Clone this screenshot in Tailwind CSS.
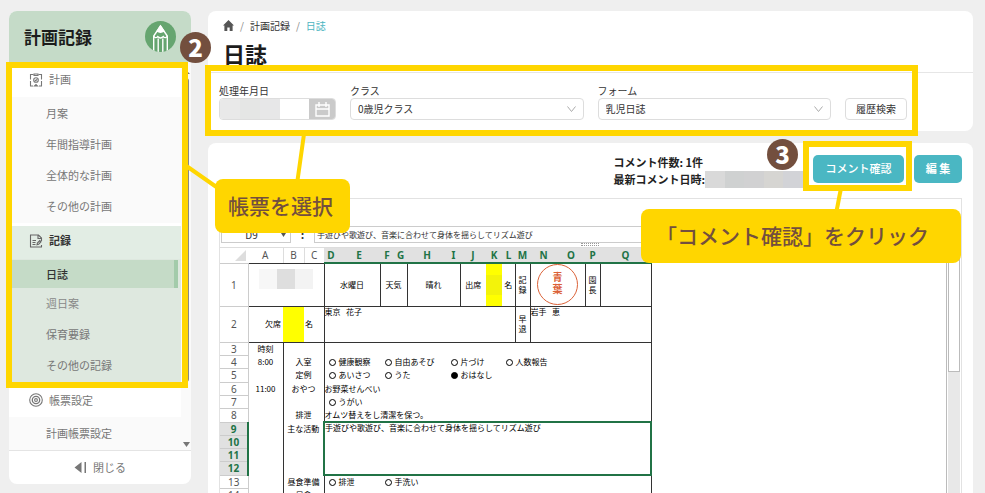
<!DOCTYPE html>
<html lang="ja">
<head>
    <meta charset="UTF-8">
    <meta name="viewport" content="width=device-width, initial-scale=1.0">
    <title>日誌 - 計画記録</title>
    <script src="https://cdn.jsdelivr.net/npm/@tailwindcss/browser@4"></script>
</head>
<body class="relative flex h-screen gap-[17px] overflow-hidden bg-[#efefef] pt-[11px] pr-3 pl-[9px] font-['Noto_Sans_CJK_JP',sans-serif] text-[#333]">

    <!-- Sidebar -->
    <aside class="mb-[9px] flex w-[182px] shrink-0 flex-col overflow-hidden rounded-lg bg-white text-[11px] text-[#777]">
        <div class="flex h-[51px] shrink-0 items-center justify-between bg-[#c5dbc8] pr-[15px] pl-[15px]">
            <h2 class="text-[17px] font-bold text-[#1c1c1c]">計画記録</h2>
            <svg class="size-[31px]" viewBox="0 0 31 31" fill="none" stroke="#fff">
                <defs><clipPath id="disc"><circle cx="15.5" cy="15.5" r="15.5"/></clipPath></defs>
                <circle cx="15.5" cy="15.5" r="15.5" fill="#66a570" stroke="none"/>
                <g clip-path="url(#disc)" stroke-width="1.4">
                    <path d="M8.7 31V15L15.5 5l6.8 10v16"/>
                    <path d="M15.5 5l-3.4 5.2q3.4 2 6.8 0z" fill="#fff"/>
                    <path d="M8.7 15q1.7 3 3.9.6 2.9 2.8 5.8 0 2.2 2.4 3.9-.6"/>
                    <path d="M13.2 17.5V31M17.8 17.5V31"/>
                </g>
            </svg>
        </div>
        <div class="flex min-h-0 flex-1">
            <nav class="flex-1 overflow-hidden">
                <a href="#" class="flex h-[35px] items-center gap-1.5 pl-5">
                    <svg class="size-[14px]" viewBox="0 0 14 14" fill="none" stroke="#777" stroke-width="1.1">
                        <path d="M4.5 1.500H1.500v5M1.500 8v5H4M9.500 1.500h3v5M12.500 8v5H10"/>
                        <path d="M5 2.500V1h4v1.500z"/>
                        <circle cx="7" cy="7" r="2.300"/>
                        <path d="M6 7l.8.8L8.200 6.200M5.500 13l1.500-1.500L8.500 13z"/>
                    </svg>
                    計画
                </a>
                <div class="flex flex-col bg-[#fafafa] py-px">
                    <a href="#" class="flex h-[31px] items-center pl-[37px]">月案</a>
                    <a href="#" class="flex h-[31px] items-center pl-[37px]">年間指導計画</a>
                    <a href="#" class="flex h-[31px] items-center pl-[37px]">全体的な計画</a>
                    <a href="#" class="flex h-[31px] items-center pl-[37px]">その他の計画</a>
                </div>
                <a href="#" class="mt-[3px] flex h-[33px] items-center gap-1.5 bg-[#e2ede4] pb-1 pl-5 font-bold text-[#333]">
                    <svg class="size-[14px]" viewBox="0 0 14 14" fill="none" stroke="#666" stroke-width="1.1">
                        <path d="M12.500 7V4L9.500 1H1.500v12h11v-2M9 1v3.500h3.500"/>
                        <path d="M3.500 6.500h3.500M3.500 8.500h3M3.500 10.500h3M8 10.800l.4-1.800L10.800 6.500l1.200 1.200-2.400 2.600z"/>
                    </svg>
                    記録
                </a>
                <div class="flex flex-col bg-[#dee8df] pt-px pb-1">
                    <a href="#" class="mr-[3px] flex h-7 items-center border-r-4 border-[#a3cbaa] bg-[#c5dbc7] pl-[37px] font-medium text-[#333]">日誌</a>
                    <a href="#" class="flex h-[31px] items-center pl-[37px] text-[#888]">週日案</a>
                    <a href="#" class="flex h-[31px] items-center pl-[37px]">保育要録</a>
                    <a href="#" class="flex h-[31px] items-center pl-[37px]">その他の記録</a>
                </div>
                <a href="#" class="flex h-[32px] items-center gap-1.5 pb-0.5 pl-5">
                    <svg class="size-[14px]" viewBox="0 0 14 14" fill="none" stroke="#777" stroke-width="1.1">
                        <circle cx="7" cy="7" r="6.3"/>
                        <circle cx="7" cy="7" r="3.7" stroke-width="1.3"/>
                        <circle cx="7" cy="7" r="1.4"/>
                    </svg>
                    帳票設定
                </a>
                <div class="bg-[#fafafa]">
                    <a href="#" class="flex h-[34px] items-center pb-0.5 pl-[37px]">計画帳票設定</a>
                </div>
            </nav>
            <div class="flex w-[10px] flex-col items-center justify-between bg-[#fafafa] pt-2 pb-[3px]">
                <svg class="h-1 w-2" viewBox="0 0 8 4" fill="#777"><path d="M0 4l4-4 4 4z"/></svg>
                <div class="my-1 mb-[60px] w-1.5 flex-1 rounded-full bg-[#888]"></div>
                <svg class="h-[5px] w-[7px] shrink-0" viewBox="0 0 7 5" fill="#777"><path d="M0 0h7L3.500 5z"/></svg>
            </div>
        </div>
        <button class="flex h-[34px] shrink-0 items-center justify-center gap-1.5 border-t border-[#e4e4e4]">
            <svg class="h-[11px] w-[13px]" viewBox="0 0 13 11" fill="#777"><path d="M7.500 0v11L.5 5.500zM10.500 0H12v11h-1.500z"/></svg>
            閉じる
        </button>
    </aside>

    <main class="flex min-w-0 flex-1 flex-col gap-3">
        <!-- Title and search form -->
        <section class="h-[120px] shrink-0 rounded-lg bg-white">
            <div class="h-[62px] border-b border-[#e6e6e6] px-[15px] pt-[7px]">
                <div class="flex items-center gap-1.5 text-[10px] leading-[15px]">
                    <svg class="h-[11px] w-[11px]" viewBox="0 0 11 11" fill="#555"><path d="M5.500 0L11 5.600H9.600V11H6.700V7.500H4.300V11H1.400V5.600H0z"/></svg>
                    <span class="text-[#888]">/</span>
                    <a href="#">計画記録</a>
                    <span class="text-[#888]">/</span>
                    <a href="#" class="text-[#4bb5c1]">日誌</a>
                </div>
                <h1 class="mt-1.5 text-[22px] leading-[28px] font-bold text-[#1c1c1c]">日誌</h1>
            </div>
            <form class="flex items-end gap-[14px] pt-[10px] pr-[66px] pl-[11px] text-[10px]">
                <div class="w-[117px]">
                    <label for="date" class="block leading-[15px]">処理年月日</label>
                    <div class="flex h-[22px] overflow-hidden rounded border border-[#ddd]">
                        <div class="relative flex-1">
                            <input id="date" type="text" class="size-full">
                            <div class="absolute inset-y-0 left-0 flex w-[60px]">
                                <span class="flex-1 bg-[#e9e9e9]"></span>
                                <span class="flex-1 bg-[#e5e6e5]"></span>
                                <span class="flex-1 bg-[#e7e7e8]"></span>
                            </div>
                        </div>
                        <button type="button" aria-label="カレンダー" class="flex w-[26px] items-center justify-center bg-[#cacaca]">
                            <svg class="size-[15px]" viewBox="0 0 15 15" fill="none" stroke="#fff" stroke-width="1.4"><path d="M1 3h13v11H1zM1 7h13M4 0v5M11 0v5"/></svg>
                        </button>
                    </div>
                </div>
                <div class="flex-1">
                    <label for="class" class="block leading-[15px]">クラス</label>
                    <div class="relative">
                        <select id="class" class="block h-[22px] w-full appearance-none rounded border border-[#ddd] bg-white px-[7px] pb-0.5">
                            <option>0歳児クラス</option>
                        </select>
                        <svg class="pointer-events-none absolute top-2 right-2 h-1.5 w-[9px]" viewBox="0 0 9 6" fill="none" stroke="#aaa"><path d="M.5.5l4 5 4-5"/></svg>
                    </div>
                </div>
                <div class="flex-1">
                    <label for="form" class="block leading-[15px]">フォーム</label>
                    <div class="relative">
                        <select id="form" class="block h-[22px] w-full appearance-none rounded border border-[#ddd] bg-white px-[7px] pb-0.5">
                            <option>乳児日誌</option>
                        </select>
                        <svg class="pointer-events-none absolute top-2 right-2 h-1.5 w-[9px]" viewBox="0 0 9 6" fill="none" stroke="#aaa"><path d="M.5.5l4 5 4-5"/></svg>
                    </div>
                </div>
                <button type="button" class="h-[22px] w-[62px] rounded border border-[#ddd] pb-0.5">履歴検索</button>
            </form>
        </section>

        <!-- Sheet -->
        <section class="flex min-h-0 flex-1 flex-col rounded-t-lg bg-white px-[11px]">
            <div class="flex h-[55px] shrink-0 items-center justify-end gap-[10px] pb-1 text-[11px]">
                <div class="pt-1 font-bold text-[#222]">
                    <p class="leading-[17px]">コメント件数: 1件</p>
                    <div class="flex items-center leading-[17px]">最新コメント日時:
                        <div class="flex h-[17px] w-[98px]">
                            <span class="flex-1 bg-[#d9d9d9]"></span>
                            <span class="flex-1 bg-[#cfd1d1]"></span>
                            <span class="flex-1 bg-[#d1d1d2]"></span>
                            <span class="flex-1 bg-[#d6d5d2]"></span>
                            <span class="flex-1 bg-[#d2d3d7]"></span>
                        </div>
                    </div>
                </div>
                <button class="h-7 w-[91px] rounded-[5px] bg-[#4ab7c3] font-medium text-white">コメント確認</button>
                <button class="h-7 w-[48px] rounded-[5px] bg-[#4ab7c3] font-bold text-white">編 集</button>
            </div>

            <div class="flex min-h-0 flex-1 flex-col overflow-hidden border-x border-t border-[#e2e2e2]">
                <div class="mt-[27px] flex h-[17px] shrink-0 items-center text-[8px]">
                    <div class="ml-px flex h-full w-[70px] items-center border border-[#ccc] pr-1">
                        <span class="flex-1 text-center text-[10px]">D9</span>
                        <svg class="h-1 w-[5px]" viewBox="0 0 5 4" fill="#555"><path d="M0 0h5L2.500 4z"/></svg>
                    </div>
                    <span class="w-[23px] text-center text-[11px] font-bold">:</span>
                    <input type="text" aria-label="数式" value="手遊びや歌遊び、音楽に合わせて身体を揺らしてリズム遊び" class="h-full flex-1 border border-[#ccc] px-0.5">
                </div>
                <div class="h-[5px] shrink-0 border-b border-[#ddd] pl-[361px]">
                    <div class="h-[3px] w-[18px] border-y border-dotted border-[#999]"></div>
                </div>

                <div class="flex min-h-0 flex-1 gap-px">
                    <div class="min-w-0 flex-1 overflow-hidden border-r border-[#bbb]">
                        <table class="w-[431px] table-fixed border-collapse text-center text-[8px] leading-[10px] whitespace-nowrap text-black [&_i]:mr-[3px] [&_i]:inline-block [&_i]:size-[7px] [&_i]:rounded-full [&_i]:border [&_i]:border-black [&_i]:align-[-1px] [&_th]:font-['Noto_Sans',sans-serif] [&_th]:text-[10px]">
                            <colgroup>
                                <col class="w-[28px]"><col class="w-[35px]"><col class="w-[21px]"><col class="w-[20px]">
                                <col class="w-[14px]"><col class="w-[42px]"><col class="w-[14px]"><col class="w-[13px]">
                                <col class="w-[40px]"><col class="w-[13px]"><col class="w-[26px]"><col class="w-[16px]">
                                <col class="w-[13px]"><col class="w-[15px]"><col class="w-[27px]"><col class="w-[28px]">
                                <col class="w-[15px]"><col class="w-[51px]">
                            </colgroup>
                            <thead>
                                <tr class="h-[15px] text-[#217346]">
                                    <th class="border-b border-[#ccc] p-0"><svg class="ml-auto mr-0.5 size-[11px]" viewBox="0 0 11 11" fill="#ddd"><path d="M11 0v11H0z"/></svg></th>
                                    <th class="border-b border-[#333] p-0 font-normal text-[#555]">A</th>
                                    <th class="border-x border-b border-[#ddd] border-b-[#333] p-0 font-normal text-[#555]">B</th>
                                    <th class="border-b border-[#333] p-0 font-normal text-[#555]">C</th>
                                    <th class="border-b-2 border-[#217346] bg-[#e1e1e1] p-0">D</th>
                                    <th class="border-b-2 border-[#217346] bg-[#e1e1e1] p-0">E</th>
                                    <th class="border-b-2 border-[#217346] bg-[#e1e1e1] p-0">F</th>
                                    <th class="border-b-2 border-[#217346] bg-[#e1e1e1] p-0">G</th>
                                    <th class="border-b-2 border-[#217346] bg-[#e1e1e1] p-0">H</th>
                                    <th class="border-b-2 border-[#217346] bg-[#e1e1e1] p-0">I</th>
                                    <th class="border-b-2 border-[#217346] bg-[#e1e1e1] p-0">J</th>
                                    <th class="border-b-2 border-[#217346] bg-[#e1e1e1] p-0">K</th>
                                    <th class="border-b-2 border-[#217346] bg-[#e1e1e1] p-0">L</th>
                                    <th class="border-b-2 border-[#217346] bg-[#e1e1e1] p-0">M</th>
                                    <th class="border-b-2 border-[#217346] bg-[#e1e1e1] p-0">N</th>
                                    <th class="border-b-2 border-[#217346] bg-[#e1e1e1] p-0">O</th>
                                    <th class="border-b-2 border-[#217346] bg-[#e1e1e1] p-0">P</th>
                                    <th class="border-b-2 border-[#217346] bg-[#e1e1e1] p-0">Q</th>
                                </tr>
                            </thead>
                            <tbody>
                                <tr class="h-[43px]">
                                    <th class="border-r border-b border-[#ccc] p-0 font-normal text-[#555]">1</th>
                                    <td colspan="3" class="border-r border-b border-[#333] p-0 pb-3">
                                        <div class="ml-2.5 flex h-5 w-[54px]">
                                            <span class="flex-1 bg-[#f7f7f7]"></span>
                                            <span class="flex-1 bg-[#dedede]"></span>
                                            <span class="flex-1 bg-[#f3f3f3]"></span>
                                        </div>
                                    </td>
                                    <td colspan="2" class="border-r border-b border-[#333] p-0">水曜日</td>
                                    <td colspan="2" class="border-r border-b border-[#333] p-0">天気</td>
                                    <td colspan="2" class="border-r border-b border-[#333] p-0">晴れ</td>
                                    <td class="border-b border-[#333] p-0">出席</td>
                                    <td class="border-b border-[#333] bg-[#ff0] p-0"><div class="h-5 bg-[#f3f30a]"></div></td>
                                    <td class="border-r border-b border-[#333] p-0">名</td>
                                    <td class="border-r border-b border-[#333] p-0">記<br>録</td>
                                    <td colspan="2" class="border-r border-b border-[#333] p-0">
                                        <div class="mx-auto flex size-[41px] items-center justify-center rounded-full border border-[#db6238] pb-1 text-[10px] leading-[12px] font-bold text-[#db6238]">青<br>葉</div>
                                    </td>
                                    <td class="border-r border-b border-[#333] p-0">園<br>長</td>
                                    <td class="border-r border-b border-[#333] p-0"></td>
                                </tr>
                                <tr class="h-9">
                                    <th class="border-r border-b border-[#ccc] p-0 font-normal text-[#555]">2</th>
                                    <td class="border-b border-[#333] p-0 pr-0.5 text-right">欠席</td>
                                    <td class="border-b border-[#333] bg-[#ff0] p-0"></td>
                                    <td class="border-r border-b border-[#333] p-0 pl-px text-left">名</td>
                                    <td colspan="9" class="border-r border-b border-[#333] p-0 text-left align-top">東京&ensp;&thinsp;花子</td>
                                    <td class="border-r border-b border-[#333] p-0">早<br>退</td>
                                    <td colspan="4" class="border-r border-b border-[#333] p-0 text-left align-top">岩手&ensp;&thinsp;恵</td>
                                </tr>
                                <tr class="h-[13px]">
                                    <th class="border-r border-b border-[#ccc] p-0 font-normal text-[#555]">3</th>
                                    <td class="border-r border-[#333] p-0">時刻</td>
                                    <td colspan="2" class="border-r border-[#333] p-0"></td>
                                    <td colspan="14" class="border-r border-[#333] p-0"></td>
                                </tr>
                                <tr class="h-[13px]">
                                    <th class="border-r border-b border-[#ccc] p-0 font-normal text-[#555]">4</th>
                                    <td class="border-r border-[#333] p-0">8:00</td>
                                    <td colspan="2" class="border-r border-[#333] p-0">入室</td>
                                    <td colspan="14" class="border-r border-[#333] p-0">
                                        <div class="grid grid-cols-[56px_66px_55px_1fr] pl-1 text-left">
                                            <span><i></i>健康観察</span><span><i></i>自由あそび</span><span><i></i>片づけ</span><span><i></i>人数報告</span>
                                        </div>
                                    </td>
                                </tr>
                                <tr class="h-[14px]">
                                    <th class="border-r border-b border-[#ccc] p-0 font-normal text-[#555]">5</th>
                                    <td class="border-r border-[#333] p-0"></td>
                                    <td colspan="2" class="border-r border-[#333] p-0">定例</td>
                                    <td colspan="14" class="border-r border-[#333] p-0">
                                        <div class="grid grid-cols-[56px_66px_55px_1fr] pl-1 text-left">
                                            <span><i></i>あいさつ</span><span><i></i>うた</span><span><i class="bg-black"></i>おはなし</span>
                                        </div>
                                    </td>
                                </tr>
                                <tr class="h-[13px]">
                                    <th class="border-r border-b border-[#ccc] p-0 font-normal text-[#555]">6</th>
                                    <td class="border-r border-[#333] p-0">11:00</td>
                                    <td colspan="2" class="border-r border-[#333] p-0">おやつ</td>
                                    <td colspan="14" class="border-r border-[#333] p-0 text-left">お野菜せんべい</td>
                                </tr>
                                <tr class="h-[13px]">
                                    <th class="border-r border-b border-[#ccc] p-0 font-normal text-[#555]">7</th>
                                    <td class="border-r border-[#333] p-0"></td>
                                    <td colspan="2" class="border-r border-[#333] p-0"></td>
                                    <td colspan="14" class="border-r border-[#333] p-0 pl-1 text-left"><i></i>うがい</td>
                                </tr>
                                <tr class="h-[14px]">
                                    <th class="border-r border-b border-[#ccc] p-0 font-normal text-[#555]">8</th>
                                    <td class="border-r border-[#333] p-0"></td>
                                    <td colspan="2" class="border-r border-[#333] p-0">排泄</td>
                                    <td colspan="14" class="border-r border-[#333] p-0 text-left">オムツ替えをし清潔を保つ。</td>
                                </tr>
                                <tr class="h-[13px]">
                                    <th class="border-r-2 border-b border-[#217346] border-b-[#ccc] bg-[#e1e1e1] p-0 text-[#217346]">9</th>
                                    <td class="border-r border-[#333] p-0"></td>
                                    <td colspan="2" class="p-0">主な活動</td>
                                    <td colspan="14" rowspan="4" class="border-2 border-[#217346] p-0 text-left align-top">手遊びや歌遊び、音楽に合わせて身体を揺らしてリズム遊び</td>
                                </tr>
                                <tr class="h-[13px]">
                                    <th class="border-r-2 border-b border-[#217346] border-b-[#ccc] bg-[#e1e1e1] p-0 text-[#217346]">10</th>
                                    <td class="border-r border-[#333] p-0"></td>
                                    <td colspan="2" class="p-0"></td>
                                </tr>
                                <tr class="h-[13px]">
                                    <th class="border-r-2 border-b border-[#217346] border-b-[#ccc] bg-[#e1e1e1] p-0 text-[#217346]">11</th>
                                    <td class="border-r border-[#333] p-0"></td>
                                    <td colspan="2" class="p-0"></td>
                                </tr>
                                <tr class="h-[14px]">
                                    <th class="border-r-2 border-b border-[#217346] border-b-[#ccc] bg-[#e1e1e1] p-0 text-[#217346]">12</th>
                                    <td class="border-r border-[#333] p-0"></td>
                                    <td colspan="2" class="p-0"></td>
                                </tr>
                                <tr class="h-[13px]">
                                    <th class="border-r border-b border-[#ccc] p-0 font-normal text-[#555]">13</th>
                                    <td class="border-r border-[#333] p-0"></td>
                                    <td colspan="2" class="border-r border-[#333] p-0">昼食準備</td>
                                    <td colspan="14" class="border-r border-[#333] p-0">
                                        <div class="grid grid-cols-[56px_66px_55px_1fr] pl-1 text-left">
                                            <span><i></i>排泄</span><span><i></i>手洗い</span>
                                        </div>
                                    </td>
                                </tr>
                                <tr class="h-[13px]">
                                    <th class="border-r border-b border-[#ccc] p-0 font-normal text-[#555]">14</th>
                                    <td class="border-r border-[#333] p-0"></td>
                                    <td colspan="2" class="border-r border-[#333] p-0">昼食</td>
                                    <td colspan="14" class="border-r border-[#333] p-0"></td>
                                </tr>
                            </tbody>
                        </table>
                    </div>
                    <div class="mr-px w-3 bg-[#e8e8e8]">
                        <div class="h-[124px] border border-[#bbb] bg-white"></div>
                    </div>
                </div>
            </div>
        </section>
    </main>

    <!-- Step 2 -->
    <div class="pointer-events-none absolute top-[62px] left-[6px] h-[326px] w-[182px] border-6 border-[#ffd600]"></div>
    <div class="pointer-events-none absolute top-[65px] right-[67px] left-[205px] h-[71px] border-6 border-[#ffd600]"></div>
    <svg class="pointer-events-none absolute top-[130px] left-[180px] h-[70px] w-[140px]" viewBox="0 0 140 70" stroke="#ffd600" stroke-width="4"><path d="M5 35l40 28M124 4l-7 50"/></svg>
    <div class="absolute top-8 left-[180px] flex size-[31px] items-center justify-center rounded-full bg-[#734f3e] pb-0.5 text-[24px] font-black text-white">2</div>
    <div class="absolute top-[179px] left-[215px] flex h-[54px] w-[135px] items-center justify-center rounded-lg bg-[#ffd600] pr-1 text-[21px] font-medium text-[#734f3e]">帳票を選択</div>

    <!-- Step 3 -->
    <div class="pointer-events-none absolute top-[141px] right-[73px] h-[50px] w-[109px] border-6 border-[#ffd600]"></div>
    <svg class="pointer-events-none absolute top-[186px] right-[135px] h-[30px] w-5" viewBox="0 0 20 30" stroke="#ffd600" stroke-width="4"><path d="M11 2L6 28"/></svg>
    <div class="absolute top-[139px] right-[187px] flex size-[31px] items-center justify-center rounded-full bg-[#734f3e] pb-0.5 text-[24px] font-black text-white">3</div>
    <div class="absolute top-[209px] right-6 flex h-[54px] w-[320px] items-center rounded-lg bg-[#ffd600] pl-[15px] text-[21px] font-medium text-[#734f3e]">「コメント確認」をクリック</div>
</body>
</html>
